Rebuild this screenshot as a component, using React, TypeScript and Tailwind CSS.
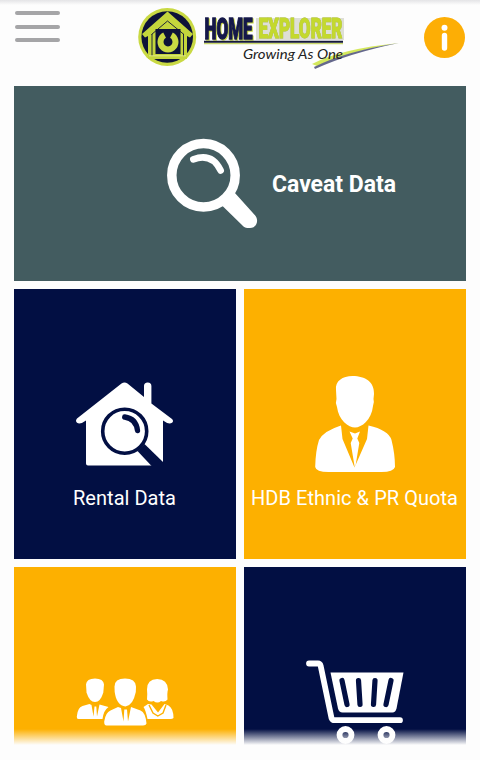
import React from "react";

function Logo() {
  return (
    <svg className="ml-[78px] h-[66px] w-[264px] shrink-0" viewBox="138 6 264 66">
      <circle cx="167.2" cy="37" r="29" fill="#c9d943" />
      <circle cx="167.2" cy="37" r="25.8" fill="#0d1238" />
      <path d="M167.5 11.500 193 34 190 37.500 187 36V59H148V36L145 37.500 142 34Z" fill="#c4d63c" />
      <path d="M151.500 34.500 167.500 21 184 34.500" fill="none" stroke="#0d1238" strokeWidth="0.9" />
      <path d="M152 34V56M183.500 34V56" stroke="#0d1238" strokeWidth="0.9" />
      <rect x="155.500" y="29" width="25" height="25" fill="#0d1238" />
      <path d="M164.600 35.200A7.500 7.500 0 1 0 171.400 35.200" fill="none" stroke="#c9d943" strokeWidth="6" />
      <path d="M168 34V42" stroke="#0d1238" strokeWidth="4" />
      <path d="M149 55.800H186" stroke="#e3e98a" strokeWidth="1" />
      <g className="font-['Roboto',sans-serif] font-black">
        <rect x="256" y="18" width="88" height="22" fill="#dedfd6" />
        <path d="M204 43.600H343" stroke="#c9d76b" strokeWidth="1.500" />
        <text x="204.500" y="39.300" fontSize="29" textLength="48" lengthAdjust="spacingAndGlyphs" fill="#15184a" stroke="#15184a" strokeWidth="1.300" className="[filter:drop-shadow(1px_1px_0_#c9d943)]">HOME</text>
        <text x="258.500" y="38.300" fontSize="27.500" textLength="84" lengthAdjust="spacingAndGlyphs" fill="#c4d92e" stroke="#c4d92e" strokeWidth="0.900" className="[filter:drop-shadow(0.7px_0.5px_0_#a5a5a5)]">EXPLORER</text>
      </g>
      <path d="M204 41.800H343" stroke="#15183a" strokeWidth="2" />
      <path d="M312 64Q340 49 399 43Q350 51 317 66Z" fill="#d4e85b" />
      <path d="M314 67Q346 51 399 43Q350 53 315 69Z" fill="#65688c" />
      <text x="243" y="58.800" fontSize="14" textLength="100" lengthAdjust="spacingAndGlyphs" fill="#222" className="font-['Lato',sans-serif] italic">Growing As One</text>
    </svg>
  );
}

function Header() {
  return (
    <header className="flex h-[86px] items-start bg-gradient-to-b from-[#e4e4e6] to-[#fdfdfd] to-[5px]">
      <div className="ml-[15px] mt-[11px] flex w-[45px] shrink-0 flex-col gap-[9.3px]">
        <span className="h-[4.300px] rounded-full bg-[#a5a5a7]" />
        <span className="h-[4.300px] rounded-full bg-[#a5a5a7]" />
        <span className="h-[4.300px] rounded-full bg-[#a5a5a7]" />
      </div>
      <div className="mt-1.5"><Logo /></div>
      <svg className="ml-[22px] mt-[17px] h-[41px] w-[41px] shrink-0" viewBox="0 0 41 41">
        <circle cx="20.500" cy="20.500" r="20.500" fill="#fdae05" />
        <circle cx="20.500" cy="10.700" r="3" fill="#fff" />
        <path d="M20.500 18.500V31" stroke="#fff" strokeWidth="5.400" strokeLinecap="round" />
      </svg>
    </header>
  );
}

function Magnifier() {
  return (
    <svg className="h-[90px] w-[91px]" viewBox="167 138 91 90">
      <circle cx="203.500" cy="175.300" r="31.700" fill="none" stroke="#fff" strokeWidth="9.500" />
      <path d="M193.300 159.300Q212 152.500 220.700 170.500" fill="none" stroke="#fff" strokeWidth="6.600" strokeLinecap="round" />
      <path d="M221.500 205 234.500 192.500 255.200 215.500C259.500 221 256 228 250 228Q246 228.500 243.500 226.500Z" fill="#fff" />
    </svg>
  );
}

function House() {
  return (
    <svg className="h-[84px] w-[98px]" viewBox="76 382.500 98 84">
      <path d="M121.500 384Q124.500 381.800 127.500 384L144 397.500V386.500Q144 383 147.700 383T151.400 386.500V404L172 419.500Q174 421.500 172 423.200Q169 425.500 163 421V466H88Q86 466 86 464V421Q80 425.500 77 423.200Q75 421.500 77 419Z" fill="#fff" />
      <circle cx="124.700" cy="431.700" r="22" fill="none" stroke="#020f43" strokeWidth="3.600" />
      <path d="M124.700 417.500Q136 419 137.500 431" fill="none" stroke="#020f43" strokeWidth="5.300" strokeLinecap="round" />
      <path d="M137.500 451.500 144.500 444.500 163.500 463V468H153Z" fill="#020f43" />
    </svg>
  );
}

function Businessman() {
  return (
    <svg className="h-[96px] w-[80px]" viewBox="314.500 376 80 96">
      <path d="M335.500 390C334.500 381 342 376 352 376C365 376 374 382 373.500 394L373 399Q374 402 372.500 406C371 420 361 427.500 354.500 427.500S338 420 336.500 407Q334.500 403 336 399Z" fill="#fff" />
      <path d="M340.500 425.500 342 439 354 467.500 366.500 439 368 425.500Q388 430 391 440Q394.500 454 394.500 467Q393 472 381 472H328Q315.500 472 314.700 467Q315 451 318.500 440Q323 431 340.500 425.500Z" fill="#fff" />
      <path d="M349 431.500 354.500 433.500 359.500 431.500 356.800 438.500 358.800 443 354.500 469 350.200 443 352.200 438.500Z" fill="#fff" />
    </svg>
  );
}

function People() {
  return (
    <svg className="h-[48px] w-[98px]" viewBox="75.500 678.500 98 48">
      <g fill="#fff">
        <path d="M85.500 685Q86 679 94.500 679T103.500 685L102.800 693Q100 702.500 94.500 702.500T86 693Z" />
        <path d="M89 704.500 91 705.500 93 717 94 707 95.800 707 96.500 717 99 705 108 707.500Q103 711 102 719.500H78Q76 719.500 76.300 717Q77 708 82 706.500Z" />
        <path d="M146.500 690Q146.500 679.500 156.700 679.500T167.500 690Q166.500 693 167 700Q165 703 160.500 701.500Q157 704.500 153 701.500Q148.500 703 146.500 700Q147 694 146.500 690Z" />
        <path d="M147.500 704.500 151 705 157.500 713 164 704.500 168 706Q173 709 173 718.500Q172 719.500 170 719.500H147Q145 710 143 707.500Z" />
        <path d="M114 687Q114 679 124.500 679T135.500 687L135.300 692.500Q132.500 706 125 707Q116 706 114.200 692.500Z" />
        <path d="M117.500 707.500 120.500 708.500 123 722 123.800 710 126.500 710 127.500 722 130.500 707.500 140 711Q145 713 146 724Q145.500 726 142.500 726H106Q103.500 726 103.700 722Q105 713 110 711Z" />
      </g>
      <path d="M148.500 705.500 152.500 713.500 157.300 716.500 162.500 713.500 165.500 705.500" fill="none" stroke="#fdb000" strokeWidth="1.400" />
    </svg>
  );
}

function Cart() {
  return (
    <svg className="h-[84px] w-[98px]" viewBox="305.500 660.500 98 84">
      <path d="M308.500 664H317.500Q319.500 664 320.200 666.500L331 718.500Q332 720.700 334 720.700H399.500" fill="none" stroke="#fff" strokeWidth="5.800" strokeLinecap="round" strokeLinejoin="round" />
      <path d="M330 673H403L396 709Q395 713 392 713H342Q338.500 713 337.500 709Z" fill="#fff" />
      <path d="M341.500 681 346.500 705M358 681 359.500 705M374.500 681 373 705M390.500 681 385.500 705" stroke="#020f43" strokeWidth="5.200" strokeLinecap="round" />
      <circle cx="345" cy="735.500" r="6" fill="none" stroke="#fff" strokeWidth="5.800" />
      <circle cx="386" cy="735.500" r="6" fill="none" stroke="#fff" strokeWidth="5.800" />
    </svg>
  );
}

function Label({ text, width }: { text: string; width: number }) {
  return (
    <svg className="h-[26px] shrink-0 overflow-visible" style={{ width }} viewBox={`0 0 ${width} 26`}>
      <text x="0" y="20" fontSize="20" textLength={width} fill="#fff">{text}</text>
    </svg>
  );
}

export default function App() {
  return (
    <div className="relative h-[760px] w-[480px] overflow-hidden bg-[#fdfdfd] font-['Roboto',sans-serif] text-white">
      <Header />
      <main className="mx-3.5 grid grid-cols-2 gap-2">
        <section className="col-span-2 flex h-[195px] bg-[#435c60] pl-[153px] pt-[52px]">
          <Magnifier />
          <h2 className="ml-3.5 mt-[31px] text-[23px] leading-[30px] font-bold">
            <svg className="h-[30px] w-[125px] overflow-visible" viewBox="0 0 125 30">
              <text x="0" y="23" fontSize="23" textLength="124" lengthAdjust="spacingAndGlyphs" fill="#fff">Caveat Data</text>
            </svg>
          </h2>
        </section>
        <section className="flex h-[270px] flex-col items-center bg-[#020f43] pt-[93px]">
          <House />
          <div className="mt-[19px] mr-px"><Label text="Rental Data" width={103} /></div>
        </section>
        <section className="flex h-[270px] flex-col items-center bg-[#fdb000] pt-[87px]">
          <div className="mr-px"><Businessman /></div>
          <div className="mt-[13px] mr-px"><Label text="HDB Ethnic & PR Quota" width={207} /></div>
        </section>
        <section className="flex h-[180px] justify-center bg-[#fdb000] pt-[111px]">
          <People />
        </section>
        <section className="flex h-[180px] justify-center bg-[#020f43] pt-[93px]">
          <div className="mr-px"><Cart /></div>
        </section>
      </main>
      <div className="absolute inset-x-0 bottom-0 h-[31px] bg-gradient-to-b from-[#fdfdfd]/0 to-[#fdfdfd] to-[16px]" />
    </div>
  );
}
